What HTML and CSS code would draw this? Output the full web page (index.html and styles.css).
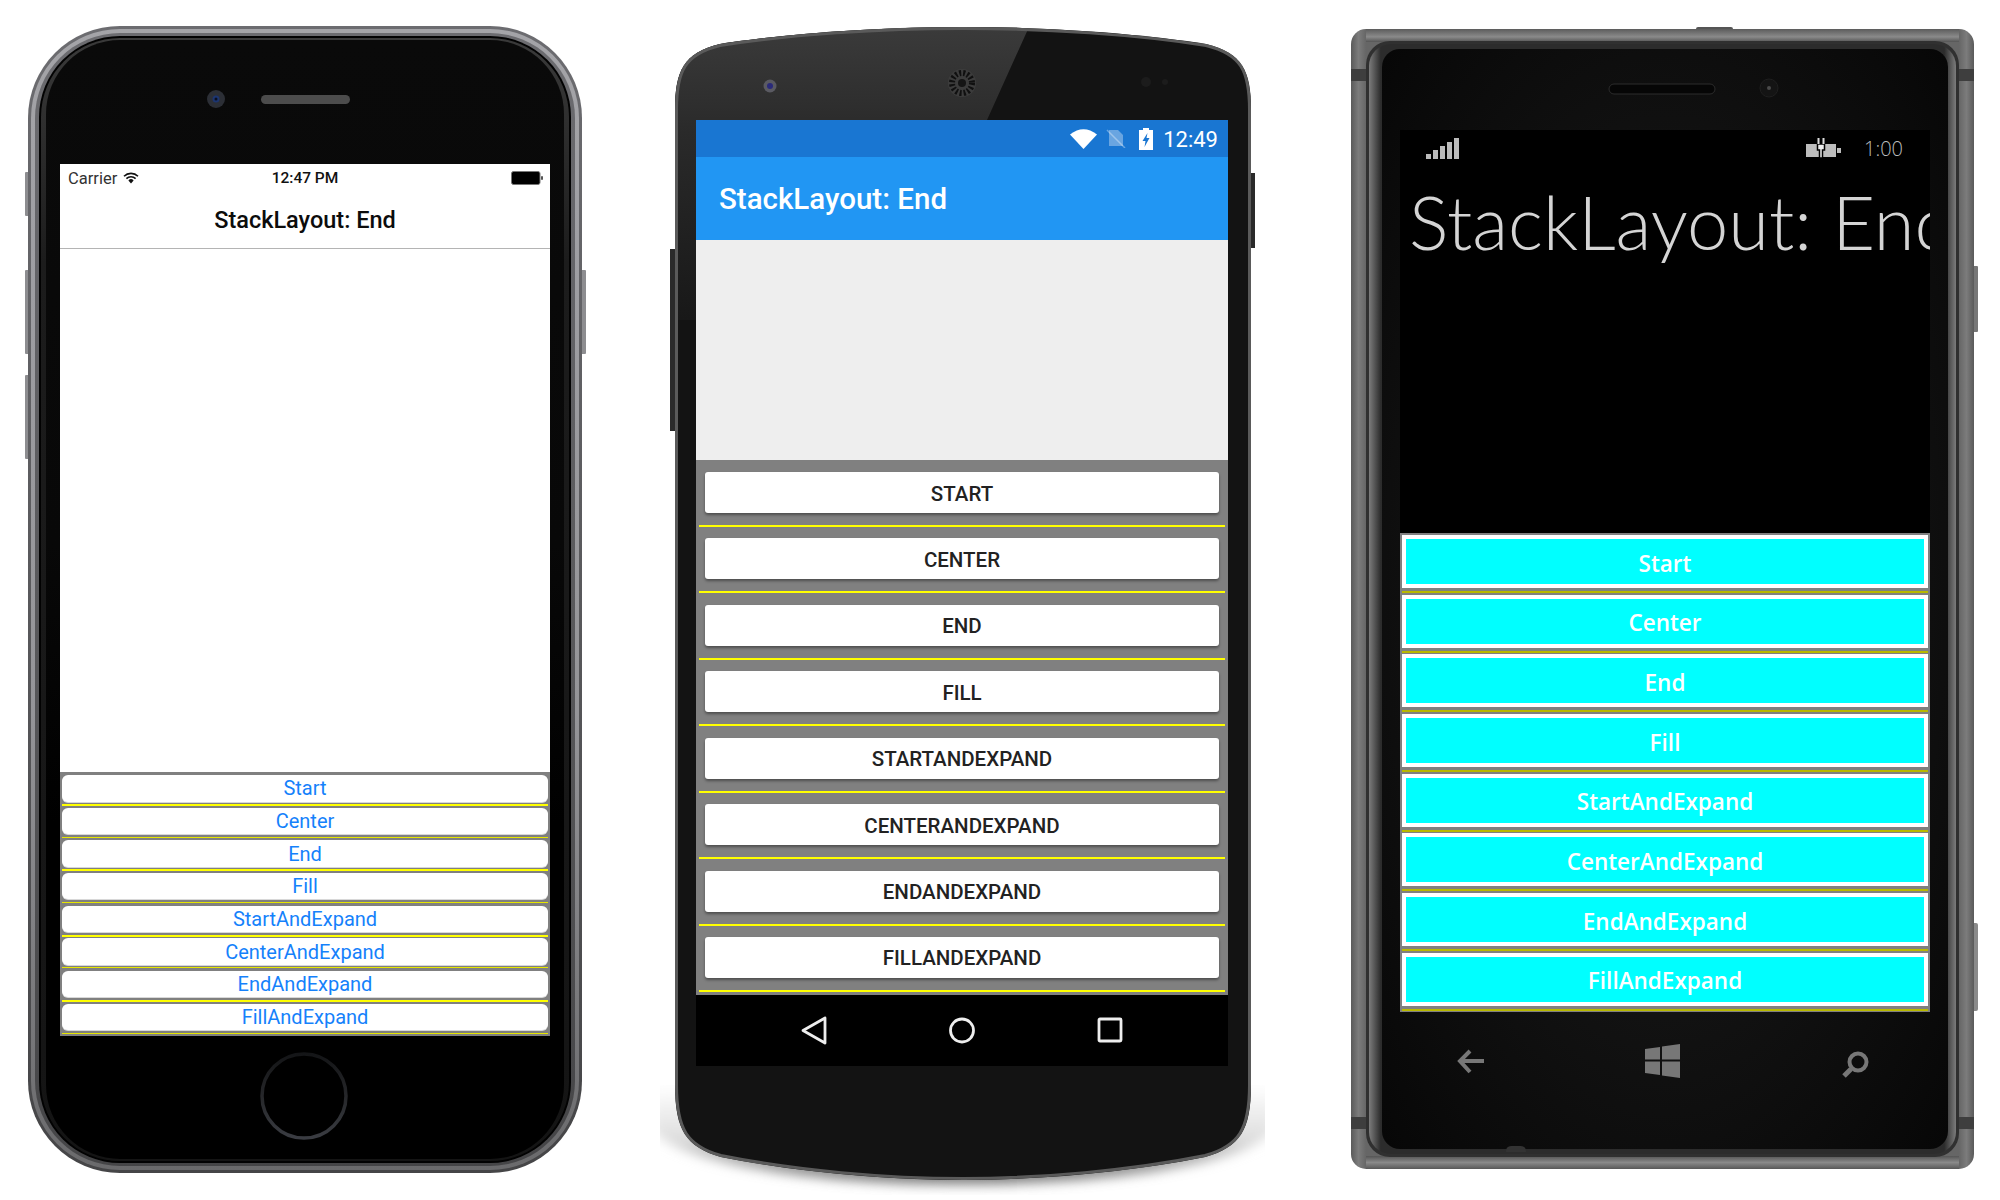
FILE: index.html
```html
<!DOCTYPE html>
<html lang="en">
<head>
<meta charset="UTF-8" />
<title>StackLayout: End</title>
<link rel="stylesheet" href="styles.css">
</head>
<body>

<div class="stage">

  <!-- iPhone -->
  <div class="phone phone-ios">
    <svg class="frame" viewBox="28 26 554 1147">
      <defs>
        <linearGradient id="iosMetal" x1="0" y1="0" x2="0" y2="1">
          <stop offset="0" stop-color="#a4a4a8" />
          <stop offset="0.6" stop-color="#949498" />
          <stop offset="1" stop-color="#6a6a6c" />
        </linearGradient>
        <linearGradient id="iosEdge" x1="0" y1="0" x2="0" y2="1">
          <stop offset="0" stop-color="#6c6c70" />
          <stop offset="1" stop-color="#454547" />
        </linearGradient>
        <linearGradient id="iosFace" x1="0" y1="0" x2="0" y2="1">
          <stop offset="0" stop-color="#0a0a0a" />
          <stop offset="0.45" stop-color="#080808" />
          <stop offset="0.7" stop-color="#000" />
        </linearGradient>
        <linearGradient id="iosBand" x1="0" y1="0" x2="0" y2="1">
          <stop offset="0" stop-color="#3a3a3a" />
          <stop offset="0.2" stop-color="#1c1c1c" />
          <stop offset="1" stop-color="#141414" />
        </linearGradient>
        <linearGradient id="iosHome" x1="0" y1="0" x2="0" y2="1">
          <stop offset="0" stop-color="#141517" />
          <stop offset="0.5" stop-color="#26272a" />
          <stop offset="1" stop-color="#3a3c42" />
        </linearGradient>
      </defs>
      <rect x="25" y="172" width="6" height="44" rx="1" fill="#8d8d90" />
      <rect x="25" y="270" width="6" height="84" rx="1" fill="#8d8d90" />
      <rect x="25" y="375" width="6" height="84" rx="1" fill="#8d8d90" />
      <rect x="579" y="270" width="7" height="84" rx="1" fill="#8d8d90" />
      <rect x="28" y="26" width="554" height="1147" rx="92" fill="url(#iosEdge)" />
      <rect x="31" y="29" width="548" height="1141" rx="89" fill="url(#iosMetal)" />
      <rect x="35" y="33" width="540" height="1133" rx="85" fill="url(#iosEdge)" />
      <rect x="39" y="36" width="532" height="1127" rx="81" fill="#020202" />
      <rect x="41" y="38" width="528" height="1123" rx="79" fill="url(#iosBand)" />
      <rect x="46" y="40" width="518" height="1119" rx="74" fill="url(#iosFace)" />
      <circle cx="216" cy="99" r="9" fill="#2c2f36" />
      <circle cx="216" cy="99" r="3.500" fill="#1c3570" />
      <circle cx="216" cy="99" r="1.500" fill="#0a0f20" />
      <rect x="261" y="95" width="89" height="9" rx="4.500" fill="#4c4c4c" />
      <circle cx="304" cy="1096" r="42" fill="none" stroke="url(#iosHome)" stroke-width="3.500" />
    </svg>
    <div class="screen ios-screen">
      <div class="ios-status">
        <span class="ios-carrier">Carrier</span>
        <svg class="ios-wifi" viewBox="0 0 16 12">
          <path d="M1 4.200 A10 10 0 0 1 15 4.200 M3.400 6.600 A6.600 6.600 0 0 1 12.600 6.600" fill="none" stroke="#111" stroke-width="1.600" />
          <path d="M5.400 8.400 A3.600 3.600 0 0 1 10.600 8.400 L8 11.400 Z" fill="#111" />
        </svg>
        <span class="ios-time">12:47 PM</span>
        <svg class="ios-battery" viewBox="0 0 32 14">
          <rect x="0.500" y="0.500" width="28.500" height="13" rx="2" fill="#000" stroke="#777" />
          <rect x="30" y="5" width="2" height="4" rx="1" fill="#555" />
        </svg>
      </div>
      <div class="ios-nav">StackLayout: End</div>
      <div class="ios-body"></div>
      <div class="stack ios-stack">
        <div class="row"><div class="btn">Start</div><div class="rule"></div></div>
        <div class="row"><div class="btn">Center</div><div class="rule"></div></div>
        <div class="row"><div class="btn">End</div><div class="rule"></div></div>
        <div class="row"><div class="btn">Fill</div><div class="rule"></div></div>
        <div class="row"><div class="btn">StartAndExpand</div><div class="rule"></div></div>
        <div class="row"><div class="btn">CenterAndExpand</div><div class="rule"></div></div>
        <div class="row"><div class="btn">EndAndExpand</div><div class="rule"></div></div>
        <div class="row"><div class="btn">FillAndExpand</div><div class="rule"></div></div>
      </div>
    </div>
  </div>

  <!-- Android -->
  <div class="phone phone-android">
    <svg class="frame" viewBox="675 27 576 1153">
      <defs>
        <filter id="droidBlur" x="-10%" y="-20%" width="120%" height="140%">
          <feGaussianBlur stdDeviation="6" />
        </filter>
        <linearGradient id="droidShadow" gradientUnits="userSpaceOnUse" x1="0" y1="1085" x2="0" y2="1185">
          <stop offset="0" stop-color="#fff" />
          <stop offset="0.55" stop-color="#ddd" />
          <stop offset="1" stop-color="#666" />
        </linearGradient>
        <linearGradient id="droidGloss" gradientUnits="userSpaceOnUse" x1="0" y1="30" x2="0" y2="320">
          <stop offset="0" stop-color="#3a3a3a" />
          <stop offset="0.35" stop-color="#2a2a2a" />
          <stop offset="1" stop-color="#181818" />
        </linearGradient>
        <clipPath id="droidShadowClip"><rect x="660" y="1085" width="605" height="110" /></clipPath>
        <clipPath id="droidBodyClip">
          <path d="M675 110 C675 70 684 53 720 44 C790 33 880 27 963 27 C1046 27 1136 33 1206 44 C1242 53 1251 70 1251 110 L1251 1085 C1251 1130 1240 1147 1205 1157 C1130 1172 1040 1180 963 1180 C886 1180 796 1172 721 1157 C686 1147 675 1130 675 1085 Z" />
        </clipPath>
      </defs>
      <g clip-path="url(#droidShadowClip)">
        <path filter="url(#droidBlur)" fill="url(#droidShadow)" d="M652 1080 L1274 1080 L1274 1130 C1250 1160 1130 1184 963 1184 C796 1184 676 1160 652 1130 Z" />
      </g>
      <rect x="670" y="249" width="8" height="182" fill="#2a2a2a" />
      <rect x="1248" y="173" width="7" height="75" fill="#2a2a2a" />
      <g clip-path="url(#droidBodyClip)">
        <rect x="675" y="27" width="576" height="1153" fill="#131313" />
        <polygon points="675,27 1029,27 987,120 696,120 696,320 675,320" fill="url(#droidGloss)" />
      </g>
      <path fill="none" stroke="#5a5a5a" stroke-width="3" d="M676.500 110 C676.500 71 685 54 720 45.500 C790 34.500 880 28.500 963 28.500 C1046 28.500 1136 34.500 1206 45.500 C1241 54 1249.500 71 1249.500 110 L1249.500 1085 C1249.500 1129 1239 1146 1205 1155.500 C1130 1170.500 1040 1178.500 963 1178.500 C886 1178.500 796 1170.500 721 1155.500 C687 1146 676.500 1129 676.500 1085 Z" />
      <circle cx="770" cy="86" r="6.500" fill="#5a5a62" />
      <circle cx="770" cy="86" r="3" fill="#2a2a7a" />
      <circle cx="962" cy="83" r="14" fill="#3c3c3c" />
      <circle cx="962" cy="83" r="10" fill="none" stroke="#101010" stroke-width="6" stroke-dasharray="2 2" />
      <circle cx="962" cy="83" r="4" fill="#151515" />
      <circle cx="1146" cy="82" r="5" fill="#1c1c1c" />
      <circle cx="1165" cy="82" r="3" fill="#1c1c1c" />
    </svg>
    <div class="screen android-screen">
      <div class="android-status">
        <svg class="android-wifi" viewBox="0 0 27 20"><path d="M0 5.500 Q13.500 -5 27 5.500 L13.500 20 Z" fill="#fff" /></svg>
        <svg class="android-nosim" viewBox="0 0 20 19">
          <path d="M3 1 L12 1 L17 6 L17 17 L3 17 Z" fill="#fff" opacity="0.35" />
          <path d="M1 1 L19 19" stroke="#fff" stroke-width="1.500" opacity="0.35" />
        </svg>
        <svg class="android-battery" viewBox="0 0 14 22">
          <path d="M4 0 H10 V2 H14 V22 H0 V2 H4 Z" fill="#fff" />
          <path d="M8.500 5 L3.500 13 H6.500 L5.500 19 L10.500 10 H7.500 Z" fill="#1976d2" />
        </svg>
        <span class="android-time">12:49</span>
      </div>
      <div class="android-bar">StackLayout: End</div>
      <div class="android-body"></div>
      <div class="stack android-stack">
        <div class="row"><div class="btn">Start</div><div class="rule"></div></div>
        <div class="row"><div class="btn">Center</div><div class="rule"></div></div>
        <div class="row"><div class="btn">End</div><div class="rule"></div></div>
        <div class="row"><div class="btn">Fill</div><div class="rule"></div></div>
        <div class="row"><div class="btn">StartAndExpand</div><div class="rule"></div></div>
        <div class="row"><div class="btn">CenterAndExpand</div><div class="rule"></div></div>
        <div class="row"><div class="btn">EndAndExpand</div><div class="rule"></div></div>
        <div class="row"><div class="btn">FillAndExpand</div><div class="rule"></div></div>
      </div>
      <div class="android-nav">
        <svg class="nav-icon" viewBox="0 0 26 29"><path d="M24 2 L2 14.500 L24 27 Z" fill="none" stroke="#eee" stroke-width="2.800" stroke-linejoin="round" /></svg>
        <svg class="nav-icon" viewBox="0 0 26 29"><circle cx="13" cy="14.500" r="11.500" fill="none" stroke="#eee" stroke-width="2.800" /></svg>
        <svg class="nav-icon" viewBox="0 0 26 29"><rect x="2" y="3" width="22" height="22" rx="1" fill="none" stroke="#eee" stroke-width="2.800" /></svg>
      </div>
    </div>
  </div>

  <!-- Windows Phone -->
  <div class="phone phone-wp">
    <svg class="frame" viewBox="1351 29 623 1140">
      <defs>
        <radialGradient id="wpFace" cx="0.5" cy="0.5" r="0.7">
          <stop offset="0" stop-color="#1f1f1f" />
          <stop offset="1" stop-color="#070707" />
        </radialGradient>
        <linearGradient id="wpMetal" x1="0" y1="0" x2="1" y2="0">
          <stop offset="0" stop-color="#5a5a5a" />
          <stop offset="0.012" stop-color="#7c7c7c" />
          <stop offset="0.024" stop-color="#666" />
          <stop offset="0.976" stop-color="#666" />
          <stop offset="0.988" stop-color="#7c7c7c" />
          <stop offset="1" stop-color="#5a5a5a" />
        </linearGradient>
        <linearGradient id="wpTop" x1="0" y1="0" x2="0" y2="1">
          <stop offset="0" stop-color="#5c5c5c" />
          <stop offset="0.6" stop-color="#8a8a8a" />
          <stop offset="1" stop-color="#555" />
        </linearGradient>
        <linearGradient id="wpBottom" x1="0" y1="0" x2="0" y2="1">
          <stop offset="0" stop-color="#555" />
          <stop offset="0.5" stop-color="#8a8a8a" />
          <stop offset="1" stop-color="#585858" />
        </linearGradient>
        <linearGradient id="wpBezel" x1="0" y1="0" x2="1" y2="0">
          <stop offset="0" stop-color="#7c7c7c" />
          <stop offset="0.02" stop-color="#2c2c2c" />
          <stop offset="0.98" stop-color="#2c2c2c" />
          <stop offset="1" stop-color="#7c7c7c" />
        </linearGradient>
      </defs>
      <rect x="1696" y="27" width="37" height="6" rx="2" fill="#555" />
      <rect x="1970" y="266" width="8" height="66" rx="1" fill="#777" />
      <rect x="1970" y="923" width="8" height="88" rx="2" fill="#8a8a8a" />
      <rect x="1351" y="29" width="623" height="1140" rx="15" fill="url(#wpMetal)" />
      <rect x="1366" y="29" width="593" height="13" fill="url(#wpTop)" />
      <rect x="1366" y="1156" width="593" height="13" fill="url(#wpBottom)" />
      <rect x="1351" y="69" width="16" height="12" fill="#3e3e3e" />
      <rect x="1958" y="69" width="16" height="12" fill="#3e3e3e" />
      <rect x="1351" y="1117" width="16" height="12" fill="#3e3e3e" />
      <rect x="1958" y="1117" width="16" height="12" fill="#3e3e3e" />
      <rect x="1366" y="41" width="593" height="1116" rx="24" fill="#303030" />
      <rect x="1369" y="44" width="587" height="1110" rx="22" fill="url(#wpBezel)" />
      <rect x="1382" y="49" width="566" height="1100" rx="18" fill="url(#wpFace)" />
      <path d="M1506 1152 C1506 1146 1509 1146 1516 1146 C1523 1146 1526 1146 1526 1152 Z" fill="#333" />
      <rect x="1609" y="84" width="106" height="10" rx="5" fill="#060606" stroke="#2c2c2c" />
      <circle cx="1769" cy="88" r="9" fill="#141414" stroke="#1f1f1f" />
      <circle cx="1769" cy="88" r="2" fill="#4a4a4a" />
      <path d="M1470 1051 L1460 1061 L1470 1072 M1461 1061 H1484" fill="none" stroke="#777" stroke-width="4" />
      <path d="M1645 1049 L1660 1047 V1059.500 H1645 Z M1662 1046.500 L1680 1044 V1059.500 H1662 Z M1645 1061.500 H1660 V1075 L1645 1073 Z M1662 1061.500 H1680 V1078 L1662 1075.500 Z" fill="#777" />
      <circle cx="1858" cy="1062" r="8.500" fill="none" stroke="#777" stroke-width="4" />
      <path d="M1851 1069 L1844 1076" stroke="#777" stroke-width="5" />
    </svg>
    <div class="screen wp-screen">
      <div class="wp-status">
        <svg class="wp-signal" viewBox="0 0 33 21">
          <rect x="0" y="16" width="5" height="5" fill="#bbb" />
          <rect x="7" y="12" width="5" height="9" fill="#bbb" />
          <rect x="14" y="8" width="5" height="13" fill="#bbb" />
          <rect x="21" y="4" width="5" height="17" fill="#bbb" />
          <rect x="28" y="0" width="5" height="21" fill="#bbb" />
        </svg>
        <svg class="wp-battery" viewBox="0 0 36 20">
          <rect x="1" y="6" width="30" height="13" fill="#bdbdbd" />
          <rect x="32" y="10" width="4" height="5" fill="#bdbdbd" />
          <path d="M12.500 6 H19.500 V12 H17.500 V20 H14.500 V12 H12.500 Z" fill="#eee" stroke="#000" stroke-width="1.500" />
          <path d="M13.500 0 V6 M18.500 0 V6" stroke="#ddd" stroke-width="2" />
        </svg>
        <span class="wp-time">1:00</span>
      </div>
      <div class="wp-title">StackLayout: End</div>
      <div class="wp-body"></div>
      <div class="stack wp-stack">
        <div class="row"><div class="btn">Start</div><div class="rule"></div></div>
        <div class="row"><div class="btn">Center</div><div class="rule"></div></div>
        <div class="row"><div class="btn">End</div><div class="rule"></div></div>
        <div class="row"><div class="btn">Fill</div><div class="rule"></div></div>
        <div class="row"><div class="btn">StartAndExpand</div><div class="rule"></div></div>
        <div class="row"><div class="btn">CenterAndExpand</div><div class="rule"></div></div>
        <div class="row"><div class="btn">EndAndExpand</div><div class="rule"></div></div>
        <div class="row"><div class="btn">FillAndExpand</div><div class="rule"></div></div>
      </div>
    </div>
  </div>

</div>

</body>
</html>
```

FILE: styles.css
```css
body {
  margin: 0;
  background: #fff;
  font-family: Roboto, "Liberation Sans", sans-serif;
}
.stage {
  display: flex;
  align-items: flex-start;
  width: 2000px;
  height: 1200px;
  overflow: hidden;
  padding-left: 28px;
  box-sizing: border-box;
}
.phone {
  position: relative;
  flex: none;
  box-sizing: border-box;
}
.frame {
  position: absolute;
  top: 0;
  left: 0;
  width: 100%;
  height: 100%;
  overflow: visible;
}
.screen {
  position: relative;
  display: flex;
  flex-direction: column;
  height: 100%;
  overflow: hidden;
}
.stack {
  flex: none;
  background: #808080;
  box-sizing: border-box;
  overflow: hidden;
}
.btn {
  display: flex;
  align-items: center;
  justify-content: center;
}

/* iPhone */
.phone-ios {
  width: 554px;
  height: 1147px;
  margin-top: 26px;
  padding: 138px 32px 137px;
}
.ios-screen {
  background: #fff;
}
.ios-status {
  position: relative;
  display: flex;
  align-items: center;
  justify-content: space-between;
  height: 28px;
  padding: 0 7px 0 8px;
  font-size: 15.5px;
  color: #111;
}
.ios-carrier {
  font-size: 16.5px;
  color: #333;
  margin-right: 6px;
}
.ios-wifi {
  width: 16px;
  height: 12px;
  margin-right: auto;
}
.ios-time {
  position: absolute;
  left: 0;
  right: 0;
  text-align: center;
  font-weight: 500;
}
.ios-battery {
  width: 32px;
  height: 14px;
}
.ios-nav {
  height: 56px;
  line-height: 56px;
  text-align: center;
  font-size: 23.5px;
  font-weight: 500;
  color: #0c0c0c;
  border-bottom: 1px solid #b4b4b4;
}
.ios-body {
  flex: 1;
}
.ios-stack {
  height: 264px;
  padding: 3px 2px 0;
}
.ios-stack .row {
  height: 32.67px;
}
.ios-stack .btn {
  height: 26.5px;
  background: #fff;
  color: #1581fb;
  font-size: 20px;
  border-radius: 6px;
  box-shadow: 0 1px 0 #d8d8d8;
}
.ios-stack .rule {
  height: 1px;
  margin-top: 2.5px;
  background: #e6e600;
}
.ios-stack .row:nth-child(odd) .rule {
  height: 2px;
  background: #ff0;
}

/* Android */
.phone-android {
  width: 576px;
  height: 1153px;
  margin: 27px 0 0 93px;
  padding: 93px 23px 114px 21px;
}
.android-status {
  display: flex;
  align-items: center;
  justify-content: flex-end;
  height: 37px;
  padding-right: 10px;
  background: #1976d2;
}
.android-wifi {
  width: 27px;
  height: 20px;
  margin-right: 9px;
}
.android-nosim {
  width: 20px;
  height: 19px;
  margin-right: 13px;
}
.android-battery {
  width: 14px;
  height: 22px;
  margin-right: 10px;
}
.android-time {
  font-size: 22px;
  color: #fff;
  padding-top: 2px;
}
.android-bar {
  height: 83px;
  line-height: 85px;
  padding-left: 23px;
  background: #2196f3;
  color: #fff;
  font-size: 29.5px;
  font-weight: 500;
}
.android-body {
  height: 220px;
  background: #eee;
}
.android-stack {
  height: 535px;
  padding: 12px 3px 0;
}
.android-stack .row {
  height: 66.43px;
}
.android-stack .btn {
  height: 41px;
  margin: 0 6px;
  padding-top: 2px;
  box-sizing: border-box;
  background: #fff;
  color: #222;
  font-size: 20.5px;
  font-weight: 500;
  text-transform: uppercase;
  border-radius: 3px;
  box-shadow: 0 2px 3px rgba(0,0,0,0.4);
}
.android-stack .rule {
  height: 2px;
  margin-top: 12px;
  background: #ff0;
}
.android-nav {
  display: flex;
  justify-content: center;
  align-items: center;
  gap: 122px;
  height: 71px;
  background: #000;
}
.nav-icon {
  width: 26px;
  height: 29px;
}

/* Windows Phone */
.phone-wp {
  width: 623px;
  height: 1140px;
  margin: 29px 0 0 100px;
  padding: 101px 44px 157px 49px;
}
.wp-screen {
  background: #000;
}
.wp-status {
  display: flex;
  align-items: center;
  height: 36px;
  padding: 0 27px 2px 26px;
  box-sizing: content-box;
}
.wp-signal {
  width: 33px;
  height: 21px;
  margin-right: auto;
}
.wp-battery {
  width: 36px;
  height: 20px;
  margin-right: 23px;
}
.wp-time {
  font-family: "Open Sans", sans-serif;
  font-weight: 300;
  font-size: 20px;
  color: #bbb;
}
.wp-title {
  height: 90px;
  line-height: 108px;
  padding-left: 9px;
  font-family: Lato, "Open Sans", sans-serif;
  font-weight: 300;
  font-size: 74px;
  color: #d4d4d4;
  white-space: nowrap;
}
.wp-body {
  flex: 1;
}
.wp-stack {
  height: 479px;
  padding: 2px 2px 0;
}
.wp-stack .row {
  height: 59.7px;
}
.wp-stack .btn {
  box-sizing: border-box;
  height: 53px;
  padding-top: 3px;
  background: #0ff;
  border: 4px solid #fff;
  color: #fff;
  font-family: "Open Sans", sans-serif;
  font-size: 22.5px;
  font-weight: 600;
}
.wp-stack .rule {
  height: 2px;
  margin-top: 3px;
  background: #b8b800;
}
```
